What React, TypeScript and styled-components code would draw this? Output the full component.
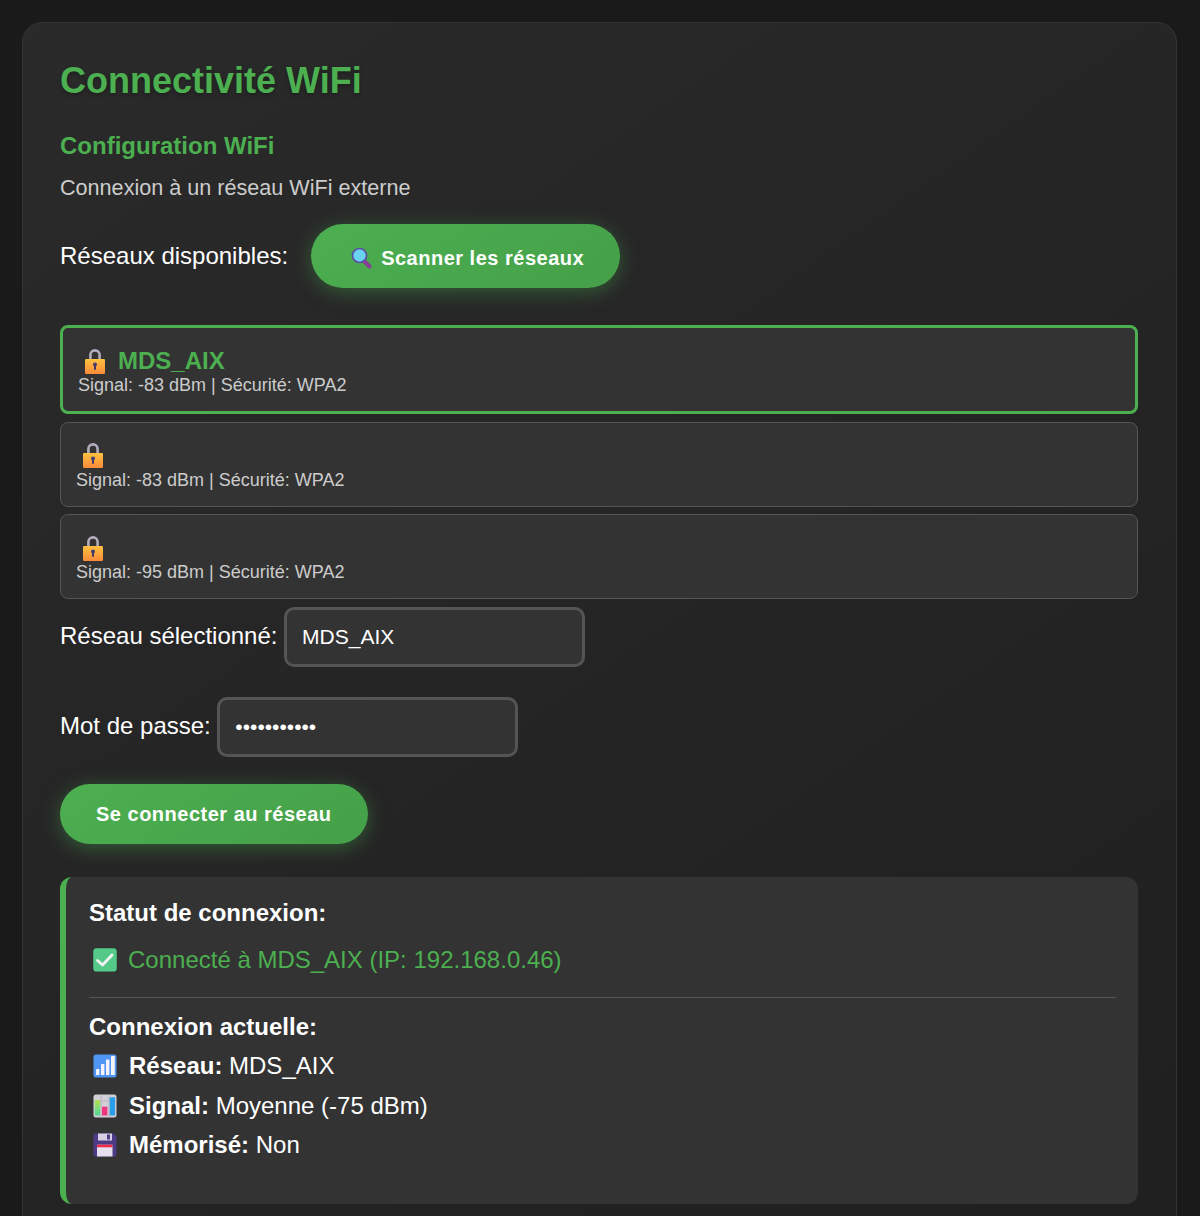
import React from "react";
import styled, { createGlobalStyle } from "styled-components";

const GlobalStyle = createGlobalStyle`
  html, body {
    margin: 0;
    height: 1216px;
    overflow: hidden;
    background: #1a1a1a;
    font-family: "Liberation Sans", Arial, sans-serif;
    color: #fff;
  }
`;

const Page = styled.div`
  height: 1216px;
  overflow: hidden;
  padding: 22px 23px 0 22px;
`;

const Card = styled.div`
  box-sizing: border-box;
  height: 1300px;
  padding: 37px 38px 0 37px;
  border: 1px solid #333;
  border-radius: 20px;
  background: linear-gradient(145deg, #2a2a2a, #1f1f1f);
`;

const Title = styled.h1`
  margin: 0;
  font-size: 36px;
  line-height: 42px;
  font-weight: 700;
  color: #4caf50;
  text-shadow: 0 2px 4px rgba(0, 0, 0, 0.3);
`;

const SubTitle = styled.h3`
  margin: 30px 0 0;
  font-size: 24px;
  line-height: 28px;
  font-weight: 700;
  color: #4caf50;
`;

const Lead = styled.p`
  margin: 14px 0 0;
  font-size: 21.6px;
  line-height: 28px;
  color: #ccc;
`;

const ScanRow = styled.div`
  display: flex;
  align-items: center;
  margin-top: 22px;
  gap: 23px;
`;

const Label = styled.label`
  font-size: 24px;
  line-height: 28px;
`;

const FieldLabel = styled(Label)`
  margin-bottom: 2px;
`;

const PillButton = styled.button<{ $height: number }>`
  display: flex;
  align-items: center;
  height: ${(p) => p.$height}px;
  padding: 0 36px;
  border: 0;
  border-radius: 32px;
  background: linear-gradient(145deg, #4caf50, #45a049);
  box-shadow: 0 4px 20px rgba(76, 175, 80, 0.4);
  color: #fff;
  font-family: inherit;
  font-size: 20px;
  font-weight: 700;
  letter-spacing: 0.5px;
`;

const ScanButton = styled(PillButton)`
  padding: 4px 36px 0 39px;
  gap: 7px;
`;

const NetworkList = styled.div`
  display: flex;
  flex-direction: column;
  gap: 7.5px;
  margin-top: 37px;
`;

const NetworkItem = styled.div<{ $selected?: boolean }>`
  padding: 15px;
  border: ${(p) => (p.$selected ? "3px solid #4caf50" : "1px solid #555")};
  border-radius: 8px;
  background: #333;
`;

const NetworkName = styled.div`
  box-sizing: border-box;
  display: flex;
  align-items: center;
  height: 32px;
  padding: 4px 0 0 6px;
  gap: 12px;
  font-size: 24px;
  font-weight: 700;
  color: #4caf50;
`;

const NetworkInfo = styled.div`
  font-size: 18px;
  line-height: 21px;
  color: #ccc;
`;

const FieldRow = styled.div<{ $top: number }>`
  display: flex;
  align-items: center;
  gap: 6.6px;
  margin-top: ${(p) => p.$top}px;
`;

const TextInput = styled.input`
  box-sizing: border-box;
  width: 301px;
  height: 60px;
  padding: 0 15px;
  border: 3px solid #555;
  border-radius: 10px;
  outline: 0;
  background: #333;
  color: #fff;
  font-family: inherit;
  font-size: 21px;
`;

const ConnectButton = styled(PillButton)`
  margin-top: 27px;
`;

const StatusPanel = styled.div`
  box-sizing: border-box;
  height: 327px;
  margin-top: 33px;
  padding: 22px 22px 0 23px;
  border-left: 6px solid #4caf50;
  border-radius: 12px;
  background: #333;
`;

const StatusHeading = styled.div`
  font-size: 24px;
  line-height: 28px;
  font-weight: 700;
`;

const StatusMessage = styled.div`
  display: flex;
  align-items: center;
  gap: 11px;
  margin-top: 19px;
  padding-left: 4px;
  font-size: 24px;
  line-height: 28px;
  color: #4caf50;
`;

const Divider = styled.hr`
  height: 1px;
  margin: 23px 0 15px;
  border: 0;
  background: #555;
`;

const DetailList = styled.div`
  display: flex;
  flex-direction: column;
  gap: 11.5px;
  margin-top: 11px;
`;

const DetailRow = styled.div`
  display: flex;
  align-items: center;
  gap: 12px;
  height: 28px;
  padding-left: 4px;
  font-size: 24px;
  white-space: pre;
`;

const LockIcon = () => (
  <svg width="22" height="25" viewBox="0 0 22 25">
    <defs>
      <linearGradient id="lockBody" x1="0" y1="0" x2="0" y2="1">
        <stop offset="0" stopColor="#ffc23f" />
        <stop offset="1" stopColor="#fb8a3a" />
      </linearGradient>
    </defs>
    <path d="M6.4 12V6a4.6 4.6 0 0 1 9.2 0V12" fill="none" stroke="#b4acbc" strokeWidth="2.6" />
    <rect x="1" y="10" width="20" height="15" rx="1.2" fill="url(#lockBody)" />
    <circle cx="11" cy="15.5" r="2" fill="#433b6b" />
    <rect x="10" y="16" width="2" height="5" rx="1" fill="#433b6b" />
  </svg>
);

const SearchIcon = () => (
  <svg width="24" height="24" viewBox="0 0 24 24">
    <path d="M14.5 15.5l5 5" stroke="#8a3f96" strokeWidth="4.4" strokeLinecap="round" />
    <circle cx="9.5" cy="9.5" r="7" fill="#6bd4f2" stroke="#5b4fa6" strokeWidth="1.7" />
    <circle cx="9.5" cy="9.5" r="5" fill="#69d3f0" />
  </svg>
);

const CheckIcon = () => (
  <svg width="24" height="24" viewBox="0 0 24 24">
    <rect x="0.5" y="0.5" width="23" height="23" rx="2.5" fill="#4fcf8d" />
    <rect x="0.5" y="0.5" width="23" height="22" rx="2.5" fill="#55c987" />
    <path d="M4.5 12.5l5 4.5 9.5-10" fill="none" stroke="#f4f4f4" strokeWidth="2.8" strokeLinecap="round" strokeLinejoin="round" />
  </svg>
);

const AntennaBarsIcon = () => (
  <svg width="24" height="24" viewBox="0 0 24 24">
    <rect x="0.5" y="0.5" width="23" height="23" rx="2.5" fill="#4f96f5" />
    <rect x="3" y="15" width="3.4" height="6" rx="0.6" fill="#f6f2fa" />
    <rect x="8" y="10" width="3.4" height="11" rx="0.6" fill="#f6f2fa" />
    <rect x="13" y="5.5" width="3.4" height="15.5" rx="0.6" fill="#f6f2fa" />
    <rect x="18" y="2" width="3.8" height="19" rx="0.6" fill="#f6f2fa" />
  </svg>
);

const BarChartIcon = () => (
  <svg width="24" height="24" viewBox="0 0 24 24">
    <defs>
      <linearGradient id="chartGreen" x1="0" y1="0" x2="0" y2="1">
        <stop offset="0" stopColor="#b4e24f" />
        <stop offset="1" stopColor="#4fd896" />
      </linearGradient>
    </defs>
    <rect x="0.5" y="0.5" width="23" height="23" rx="2.5" fill="#d3cfd6" />
    <path d="M0.5 7h23M8 0.5v23M16 0.5v23" stroke="#b4acbc" strokeWidth="0.8" />
    <rect x="1.8" y="6" width="5.4" height="15.5" fill="url(#chartGreen)" />
    <rect x="9" y="12.7" width="5.4" height="8.8" fill="#ee3580" />
    <rect x="16.7" y="3.3" width="5.4" height="18.2" fill="#2a9de8" />
  </svg>
);

const FloppyIcon = () => (
  <svg width="24" height="24" viewBox="0 0 24 24">
    <path d="M2.5 0.5h18l3 3v18a2 2 0 0 1-2 2h-19a2 2 0 0 1-2-2v-19a2 2 0 0 1 2-2z" fill="#4d3a86" />
    <rect x="5" y="0.5" width="14" height="7" fill="#d6cfe4" />
    <rect x="14" y="1.5" width="3" height="5" fill="#4d3a86" />
    <rect x="4" y="11.7" width="15.5" height="11.8" fill="#e6dff0" />
    <rect x="4" y="11.7" width="15.5" height="2.6" fill="#f02c4a" />
  </svg>
);

const networks = [
  { name: "MDS_AIX", signal: -83, selected: true },
  { name: "", signal: -83, selected: false },
  { name: "", signal: -95, selected: false },
];

export default function App() {
  return (
    <Page>
      <GlobalStyle />
      <Card>
        <Title>Connectivité WiFi</Title>
        <SubTitle>Configuration WiFi</SubTitle>
        <Lead>Connexion à un réseau WiFi externe</Lead>
        <ScanRow>
          <Label>Réseaux disponibles:</Label>
          <ScanButton $height={64}>
            <SearchIcon />
            Scanner les réseaux
          </ScanButton>
        </ScanRow>
        <NetworkList>
          {networks.map((n, i) => (
            <NetworkItem key={i} $selected={n.selected}>
              <NetworkName>
                <LockIcon />
                {n.name}
              </NetworkName>
              <NetworkInfo>Signal: {n.signal} dBm | Sécurité: WPA2</NetworkInfo>
            </NetworkItem>
          ))}
        </NetworkList>
        <FieldRow $top={8}>
          <FieldLabel>Réseau sélectionné:</FieldLabel>
          <TextInput type="text" defaultValue="MDS_AIX" />
        </FieldRow>
        <FieldRow $top={30}>
          <FieldLabel>Mot de passe:</FieldLabel>
          <TextInput type="password" defaultValue="motdepasse1" />
        </FieldRow>
        <ConnectButton $height={60}>Se connecter au réseau</ConnectButton>
        <StatusPanel>
          <StatusHeading>Statut de connexion:</StatusHeading>
          <StatusMessage>
            <CheckIcon />
            Connecté à MDS_AIX (IP: 192.168.0.46)
          </StatusMessage>
          <Divider />
          <StatusHeading>Connexion actuelle:</StatusHeading>
          <DetailList>
            <DetailRow>
              <AntennaBarsIcon />
              <span><strong>Réseau:</strong> MDS_AIX</span>
            </DetailRow>
            <DetailRow>
              <BarChartIcon />
              <span><strong>Signal:</strong> Moyenne (-75 dBm)</span>
            </DetailRow>
            <DetailRow>
              <FloppyIcon />
              <span><strong>Mémorisé:</strong> Non</span>
            </DetailRow>
          </DetailList>
        </StatusPanel>
      </Card>
    </Page>
  );
}
